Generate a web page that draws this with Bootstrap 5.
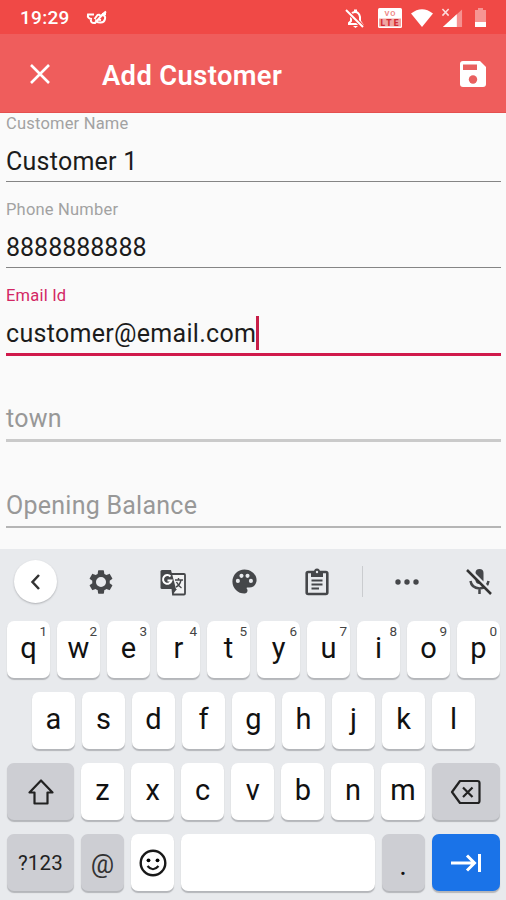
<!DOCTYPE html>
<html lang="en">
<head>
<meta charset="utf-8">
<meta name="viewport" content="width=device-width, initial-scale=1">
<title>Add Customer</title>
<link href="https://cdn.jsdelivr.net/npm/bootstrap@5.3.0/dist/css/bootstrap.min.css" rel="stylesheet">
<style>
body{font-family:Roboto,"Liberation Sans",sans-serif;background:#fafafa;color:#1c1c1c;width:506px;height:900px;overflow:hidden}
svg{display:block;flex:none}
.status-bar{height:34px;background:#f04946;color:#fff;padding:2px 20px 0 20px}
.clock{font-size:19px;font-weight:500;letter-spacing:.3px;line-height:34px;width:66px}
.status-icons{gap:8px}
.app-bar{height:79px;background:#ef5d5c;border-bottom:1px solid #e5504f;color:#fff;padding:2px 18px 0 29px}
.app-title{font-size:27.3px;font-weight:600;line-height:40px;letter-spacing:.4px;margin:4px 0 0 51px}
.form-area{height:436px;padding:0 5px 0 6px}
.field{height:86.4px}
.field:first-child{height:69px}
.field-label{font-size:16.5px;line-height:20px;margin-bottom:8px;color:#a2a2a2;letter-spacing:.2px}
.field-value{font-size:25px;line-height:39px;height:39px;white-space:nowrap;letter-spacing:.25px}
.digits{letter-spacing:0}
.rule{height:1.5px;background:#858585}
.rule-soft{height:2px;background:#b5b5b5}
.rule-town{height:3px;background:#cacaca;margin-bottom:-1px}
.hint{color:#989898;line-height:37px}
.focus .field-value{letter-spacing:.3px}
.focus .field-label{color:#d32764}
.focus .rule{height:3px;background:#d0194b;margin-bottom:-1px}
.caret{width:2.5px;height:34px;background:#c71e48}
.keyboard{height:351px;background:#e8eaed;color:#111}
.tools{height:72px;padding:0 13px 7px 14px;color:#45474a}
.back-circle{width:43px;height:43px;background:#fff;box-shadow:0 1px 2px #aeb0b4}
.tool-set{gap:43.5px;margin-left:30px}
.tool-more{gap:45.5px}
.tool-split{width:1px;height:31px;background:#cacccf}
.keys{gap:7px;padding:0 6px 0 7px;height:57px;margin-bottom:14px}
.keys-mid{padding-left:32px;padding-right:31px}
.key{flex:1 1 0;min-width:0;background:#fff;border-radius:7px;box-shadow:0 1.5px 1px #b4b6ba;font-size:29px;line-height:55px;text-align:center;position:relative}
.key-fn{background:#cdced3}
.key-wide{flex:0 0 67px}
.key-end{flex:0 0 68.5px}
.key-one{flex:0 0 43px}
.key-sym{font-size:20.5px;letter-spacing:.2px;line-height:58px;color:#222}
.key-at{font-size:26px;line-height:61px;color:#333}
.key-dot{line-height:63px}
.key-go{background:#1a73e8;color:#fff}
.digit{position:absolute;right:3px;top:3px;font-size:13.5px;line-height:14px;color:#444}
</style>
</head>
<body>
<header>
<div class="status-bar d-flex align-items-center">
<span class="clock">19:29</span>
<svg width="22" height="18" viewBox="0 0 22 18" fill="none" stroke="#fff" stroke-width="2"><path d="M8 5.500H2q-1 4 4 4.500M5 9.500q-1 5 4 4.500l8-9 3-2.500M8.500 10l3-4q2-1 3 1M15.500 6q4.500 0 3.500 4t-5 3.500q-4 0-4-3M12 10.500l3 .5M16 5h4"/></svg>
<div class="status-icons ms-auto d-flex align-items-center">
<svg width="20" height="21" viewBox="0 0 20 21"><path d="M4 15l2-2V9q0-5 4-5 4 0 5 5v4l2 3H4z" fill="none" stroke="#fff" stroke-width="2"/><path d="M8 18h5l-2.500 2zM9 1.500h3V4H9z" fill="#fff"/><path d="M1 2l17 17" stroke="#f04946" stroke-width="4"/><path d="M1 2l17 17" stroke="#fff" stroke-width="2"/></svg>
<svg class="ms-1" width="26" height="21" viewBox="0 0 26 21"><rect x="1" y="0" width="24" height="20" rx="1.500" fill="#fff"/><rect x="2" y="10.500" width="22" height="8" fill="#f0a5a2"/><text x="13.500" y="8" text-anchor="middle" font-size="7.500" font-weight="700" fill="#ee8886" font-family="Roboto,sans-serif" letter-spacing="1">VO</text><text x="13.500" y="18" text-anchor="middle" font-size="8.500" font-weight="900" fill="#d32c35" font-family="Roboto,sans-serif" letter-spacing="2">LTE</text></svg>
<svg width="22" height="18" viewBox="0 0 22 18"><path d="M0 4.500Q11-4 22 4.500L11 18z" fill="#fff"/></svg>
<svg width="22" height="22" viewBox="0 0 23 22"><path d="M22 2v18.500H2z" fill="#fff" opacity=".4"/><path d="M16.500 7v13.500H2z" fill="#fff"/><path d="M1.500 1.500l6.500 7M8 1.500l-6.500 7" stroke="#fff" stroke-opacity=".8" stroke-width="1.600"/></svg>
<svg class="ms-1" width="11" height="20" viewBox="0 0 11 20"><path d="M3 0h5v2h3v12H0V2h3z" fill="#fff" opacity=".42"/><path d="M0 14h11v5H0z" fill="#fff"/></svg>
</div>
</div>
<div class="app-bar d-flex align-items-center">
<svg width="22" height="22" viewBox="0 0 22 22"><path d="M2 2l18 18M20 2L2 20" stroke="#fff" stroke-width="2.600"/></svg>
<h1 class="app-title">Add Customer</h1>
<svg class="ms-auto" width="30" height="30" viewBox="0 0 30 30"><path d="M5 2h17l6 6v17q0 3-3 3H5q-3 0-3-3V5q0-3 3-3z" fill="#fff"/><path d="M5 5.500h14v5.500H5z" fill="#e9605f"/><circle cx="15" cy="20.500" r="4.200" fill="#e9605f"/></svg>
</div>
</header>
<main class="form-area">
<div class="field d-flex flex-column justify-content-end"><div class="field-label">Customer Name</div><div class="field-value">Customer 1</div><div class="rule"></div></div>
<div class="field d-flex flex-column justify-content-end"><div class="field-label">Phone Number</div><div class="field-value digits">8888888888</div><div class="rule"></div></div>
<div class="field focus d-flex flex-column justify-content-end"><div class="field-label">Email Id</div><div class="field-value d-flex align-items-center"><span>customer@email.com</span><span class="caret"></span></div><div class="rule"></div></div>
<div class="field d-flex flex-column justify-content-end"><div class="field-value hint">town</div><div class="rule-town"></div></div>
<div class="field d-flex flex-column justify-content-end"><div class="field-value hint">Opening Balance</div><div class="rule-soft"></div></div>
</main>
<section class="keyboard">
<div class="tools d-flex align-items-center">
<div class="back-circle rounded-circle d-flex align-items-center justify-content-center"><svg width="14" height="20" viewBox="0 0 14 20"><path d="M10 3L3.500 10l6.500 7" fill="none" stroke="#333" stroke-width="2.500"/></svg></div>
<div class="tool-set d-flex align-items-center">
<svg width="28" height="28" viewBox="0 0 24 24"><path fill="currentColor" d="M19.430 12.980c.04-.32.07-.64.07-.98s-.03-.66-.07-.98l2.110-1.650c.19-.15.24-.42.12-.64l-2-3.460c-.12-.22-.39-.3-.61-.22l-2.490 1c-.52-.4-1.080-.73-1.690-.98l-.38-2.650C14.460 2.180 14.250 2 14 2h-4c-.25 0-.46.18-.49.42l-.38 2.650c-.61.25-1.170.59-1.690.98l-2.490-1c-.23-.09-.49 0-.61.22l-2 3.460c-.13.22-.07.49.12.64l2.110 1.650c-.04.32-.07.65-.07.98s.03.66.07.98l-2.110 1.650c-.19.15-.24.42-.12.64l2 3.460c.12.22.39.3.61.22l2.490-1c.52.4 1.080.73 1.690.98l.38 2.650c.03.24.24.42.49.42h4c.25 0 .46-.18.49-.42l.38-2.650c.61-.25 1.170-.59 1.690-.98l2.490 1c.23.09.49 0 .61-.22l2-3.460c.12-.22.07-.49-.12-.64l-2.110-1.650zM12 16.300a4.300 4.300 0 1 1 0-8.600 4.300 4.300 0 0 1 0 8.600z"/></svg>
<svg width="28" height="28" viewBox="0 0 28 28"><path d="M12 6h13q1 0 1 1v18.500q0 1-1 1H14z" fill="#f2f3f4" stroke="currentColor" stroke-width="1.800"/><path d="M3 2h9l5 19H3q-1.500 0-1.500-1.500v-16Q1.500 2 3 2z" fill="currentColor"/><path d="M14 21h4l-4 5z" fill="currentColor"/><path d="M11.500 8.500a4.300 4.300 0 1 0 1 4H8.500" fill="none" stroke="#fff" stroke-width="2"/><path d="M16 12h8M19.500 10v2M22 12q-1 5-5 7M17.500 14q2 4 5 6" fill="none" stroke="currentColor" stroke-width="1.400"/></svg>
<svg width="29" height="29" viewBox="0 0 24 24"><path fill="currentColor" d="M12 2C6.490 2 2 6.490 2 12s4.490 10 10 10c1.380 0 2.500-1.120 2.500-2.500 0-.61-.23-1.200-.64-1.670-.08-.1-.13-.21-.13-.33 0-.28.22-.5.5-.5H16c3.310 0 6-2.690 6-6 0-4.960-4.490-9-10-9z"/><g fill="#e8eaed"><circle cx="17.300" cy="11.500" r="1.700"/><circle cx="14.500" cy="7.300" r="1.700"/><circle cx="9.500" cy="7.300" r="1.700"/><circle cx="6.500" cy="11.500" r="1.700"/></g></svg>
<svg width="28" height="28" viewBox="0 0 28 28"><rect x="3.700" y="4" width="20.600" height="22" rx="1.500" fill="none" stroke="currentColor" stroke-width="2.600"/><path d="M8 4h3q0-3.500 3-3.500T17 4h3v5H8z" fill="currentColor"/><circle cx="14" cy="4" r="1.200" fill="#e8eaed"/><path d="M8.500 12.500h11M8.500 16.500h11M8.500 20.500h7.500" stroke="currentColor" stroke-width="2.100"/></svg>
</div>
<div class="tool-split ms-auto me-auto"></div>
<div class="tool-set tool-more ms-0 d-flex align-items-center">
<svg width="26" height="8" viewBox="0 0 26 8" fill="currentColor"><circle cx="4" cy="4" r="2.700"/><circle cx="13" cy="4" r="2.700"/><circle cx="22" cy="4" r="2.700"/></svg>
<svg width="28" height="30" viewBox="0 0 28 30"><rect x="10.500" y="2" width="8" height="15" rx="4" fill="currentColor"/><path d="M5.500 14q1 7 9 7.500 8-.5 9-7.500M14.500 21v6" fill="none" stroke="currentColor" stroke-width="2.500"/><path d="M4 2l24 24" stroke="#e8eaed" stroke-width="3"/><path d="M2 3l24 24" stroke="#333" stroke-width="2.500"/></svg>
</div>
</div>
<div class="keys d-flex"><div class="key">q<span class="digit">1</span></div><div class="key">w<span class="digit">2</span></div><div class="key">e<span class="digit">3</span></div><div class="key">r<span class="digit">4</span></div><div class="key">t<span class="digit">5</span></div><div class="key">y<span class="digit">6</span></div><div class="key">u<span class="digit">7</span></div><div class="key">i<span class="digit">8</span></div><div class="key">o<span class="digit">9</span></div><div class="key">p<span class="digit">0</span></div></div>
<div class="keys keys-mid d-flex"><div class="key">a</div><div class="key">s</div><div class="key">d</div><div class="key">f</div><div class="key">g</div><div class="key">h</div><div class="key">j</div><div class="key">k</div><div class="key">l</div></div>
<div class="keys d-flex">
<div class="key key-fn key-wide d-flex align-items-center justify-content-center"><svg width="30" height="30" viewBox="0 0 30 30"><path d="M15 3.500L3.500 15.500H8.500V26.500H21.500V15.500H26.500z" fill="none" stroke="#222" stroke-width="2.200" stroke-linejoin="round"/></svg></div>
<div class="key">z</div><div class="key">x</div><div class="key">c</div><div class="key">v</div><div class="key">b</div><div class="key">n</div><div class="key">m</div>
<div class="key key-fn key-end d-flex align-items-center justify-content-center"><svg width="32" height="26" viewBox="0 0 32 26"><path d="M10 2H27.500q2 0 2 2V22q0 2-2 2H10L2 13z" fill="none" stroke="#222" stroke-width="2.200" stroke-linejoin="round"/><path d="M13 8.500l9.500 9.500M22.500 8.500L13 18" stroke="#222" stroke-width="2.200"/></svg></div>
</div>
<div class="keys d-flex">
<div class="key key-fn key-wide key-sym">?123</div><div class="key key-fn key-one key-at">@</div>
<div class="key key-one d-flex align-items-center justify-content-center"><svg width="28" height="28" viewBox="0 0 28 28"><circle cx="14" cy="14" r="12.300" fill="none" stroke="#181818" stroke-width="2.400"/><circle cx="9.500" cy="11.300" r="1.900"/><circle cx="18.500" cy="11.300" r="1.900"/><path d="M8.500 17q5.500 6.500 11 0" fill="none" stroke="#181818" stroke-width="2.200"/></svg></div>
<div class="key"></div>
<div class="key key-fn key-one key-dot">.</div>
<div class="key key-go key-end d-flex align-items-center justify-content-center"><svg width="32" height="20" viewBox="0 0 32 20"><path d="M1 10H24M17 2.500L24.500 10L17 17.500M29.500 1V19" fill="none" stroke="#fff" stroke-width="3"/></svg></div>
</div>
</section>
<script src="https://cdn.jsdelivr.net/npm/bootstrap@5.3.0/dist/js/bootstrap.bundle.min.js"></script>
</body>
</html>
